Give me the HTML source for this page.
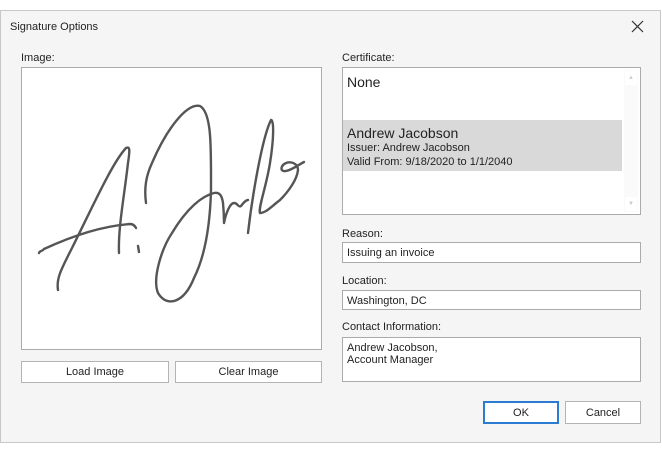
<!DOCTYPE html>
<html><head><style>
body{margin:0;width:662px;height:453px;background:#fff;font-family:"Liberation Sans",sans-serif;font-size:11px;color:#222;position:relative;overflow:hidden}
.dlg{position:absolute;left:0;top:10px;width:659px;height:431px;background:#f5f5f5;border:1px solid #c8c8c8}
.a{position:absolute}
.box{position:absolute;background:#fff;border:1px solid #ababab;box-sizing:border-box}
.btn{position:absolute;background:#fff;border:1px solid #b4b4b4;box-sizing:border-box;text-align:center;line-height:21px}
</style></head><body>
<div class="dlg"></div>
<div class="a" style="left:10px;top:21px">Signature Options</div>
<svg class="a" style="left:631px;top:20px" width="13" height="13"><path d="M1 1L12 12M12 1L1 12" stroke="#333" stroke-width="1.2"/></svg>
<div class="a" style="left:21px;top:52px">Image:</div>
<div class="box" style="left:21px;top:67px;width:301px;height:283px">
<svg width="299" height="281" style="position:absolute;left:0;top:0"><g fill="none" stroke="#555" stroke-width="2.4" stroke-linecap="round" stroke-linejoin="round">
<path d="M36 222C34 210 40 200 50 180C70 140 90 95 104 80C108 78 108 82 106 95C102 130 96 160 97 185"/>
<path d="M17 185C18 182 20 184 22 181C50 168 80 158 108 156C111 156 113 158 114 160"/>
<path d="M116 178l1 6"/>
<path d="M124 135C122 120 124 108 130 95C145 60 165 35 178 38C190 45 189 80 189 122C188 160 182 190 172 210C162 235 145 240 136 225C130 210 140 180 150 165C165 140 180 128 192 125C198 124 200 128 201 135C202 145 202 152 202 155C204 145 208 135 212 135C216 135 216 140 219 138C222 134 224 132 226 132"/>
<path d="M226 165C230 130 240 70 249 52C252 52 252 70 248 95C244 120 236 140 238 145C244 145 250 138 258 132C266 124 275 112 276 102C276 96 270 93 264 95C258 98 258 104 264 103C270 102 276 97 282 94"/>
</g></svg></div>
<div class="btn" style="left:21px;top:361px;width:148px;height:22px">Load Image</div>
<div class="btn" style="left:175px;top:361px;width:147px;height:22px">Clear Image</div>
<div class="a" style="left:342px;top:52px">Certificate:</div>
<div class="box" style="left:342px;top:67px;width:299px;height:148px">
<div class="a" style="left:4px;top:6px;font-size:14px">None</div>
<div class="a" style="left:0;top:52px;width:279px;height:51px;background:#d9d9d9"></div>
<div class="a" style="left:4px;top:57px;font-size:14px">Andrew Jacobson</div>
<div class="a" style="left:4px;top:74px">Issuer: Andrew Jacobson</div>
<div class="a" style="left:4px;top:88px">Valid From: 9/18/2020 to 1/1/2040</div>
<div class="a" style="left:281px;top:2px;width:14px;height:142px;background:#fafafa"></div>
<div class="a" style="left:282px;top:3px;width:12px;height:14px;background:#fff;color:#ccc;font-size:6px;text-align:center;line-height:14px">▲</div>
<div class="a" style="left:282px;top:129px;width:12px;height:14px;background:#fff;color:#ccc;font-size:6px;text-align:center;line-height:14px">▼</div>
</div>
<div class="a" style="left:342px;top:228px">Reason:</div>
<div class="box" style="left:342px;top:242px;width:299px;height:21px;padding:4px 4px">Issuing an invoice</div>
<div class="a" style="left:342px;top:275px">Location:</div>
<div class="box" style="left:342px;top:290px;width:299px;height:20px;padding:4px 4px">Washington, DC</div>
<div class="a" style="left:342px;top:321px">Contact Information:</div>
<div class="box" style="left:342px;top:337px;width:299px;height:45px;padding:4px 4px;line-height:12px">Andrew Jacobson,<br>Account Manager</div>
<div class="btn" style="left:483px;top:401px;width:76px;height:23px;border:2px solid #2b7bd0;line-height:20px">OK</div>
<div class="btn" style="left:565px;top:401px;width:76px;height:23px;line-height:22px">Cancel</div>
</body></html>
